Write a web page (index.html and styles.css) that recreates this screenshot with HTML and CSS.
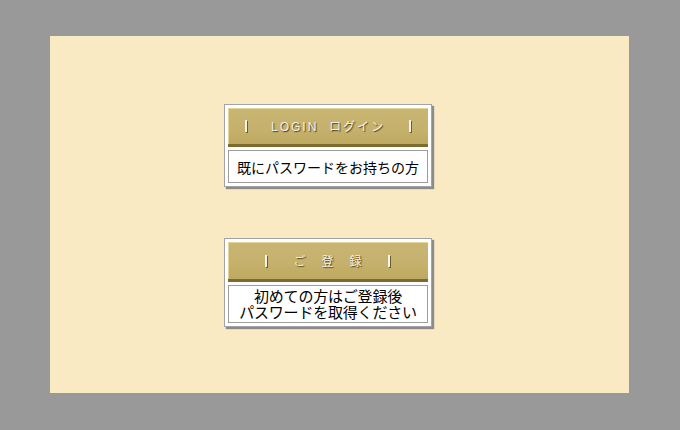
FILE: index.html
```html
<!DOCTYPE html>
<html lang="ja">
<head>
<meta charset="utf-8">
<link rel="stylesheet" href="styles.css">
</head>
<body>
<div class="panel">
  <div class="box box-login">
    <div class="head">
      <span class="bar"></span>
      <span class="label">LOGIN&nbsp;&nbsp;ログイン</span>
      <span class="bar"></span>
    </div>
    <div class="desc one">既にパスワードをお持ちの方</div>
  </div>
  <div class="box box-reg">
    <div class="head reg">
      <span class="bar"></span>
      <span class="label spaced">ご登録</span>
      <span class="bar"></span>
    </div>
    <div class="desc two">初めての方はご登録後<br>パスワードを取得ください</div>
  </div>
</div>
</body>
</html>
```

FILE: styles.css
```css
html, body {
  margin: 0;
  padding: 0;
  background: #999999;
  width: 680px;
  height: 430px;
  overflow: hidden;
}
.panel {
  margin: 36px 0 0 50px;
  width: 579px;
  height: 357px;
  background: #f9eac3;
  box-sizing: border-box;
  padding: 68px 0 0 174px;
  display: flex;
  flex-direction: column;
  gap: 51px;
}
.box {
  width: 208px;
  box-sizing: border-box;
  background: #ffffff;
  border: 1px solid #a3a3a3;
  padding: 3px;
  box-shadow: 2px 2px 1px #8c8c8c;
  display: flex;
  flex-direction: column;
  gap: 3px;
  font-family: "Noto Sans CJK JP", "DejaVu Sans", sans-serif;
}
.head {
  height: 39px;
  box-sizing: border-box;
  background: linear-gradient(#c9b673, #c5b16c 60%, #bea961);
  border-bottom: 3px solid #7d6a2e;
  box-shadow: inset 1px 1px 0 #e2d39b;
  display: flex;
  align-items: center;
  justify-content: space-between;
  padding: 0 17px 0 17px;
}
.head.reg {
  height: 40px;
  padding: 0 38px 0 37px;
}
.bar {
  width: 2px;
  height: 12px;
  background: #f6f3ea;
  box-shadow: 1px 1px 0 #6e5e2a;
}
.label {
  color: #f4f1e8;
  font-family: "Liberation Sans", "Noto Sans CJK JP", sans-serif;
  font-size: 12px;
  letter-spacing: 2px;
  text-shadow: 1px 1px 1px #4f421a;
  margin-top: -1px;
}
.label.spaced {
  font-family: "Noto Sans CJK JP", sans-serif;
  font-size: 12px;
  letter-spacing: 16px;
  margin-right: -16px;
}
.desc {
  border: 1px solid #9d9d9d;
  box-sizing: border-box;
  color: #000;
  text-align: center;
  display: flex;
  align-items: center;
  justify-content: center;
}
.desc.one {
  height: 33px;
  font-size: 14px;
}
.desc.two {
  height: 38px;
  font-size: 15px;
  line-height: 16px;
  letter-spacing: -0.2px;
}
```
